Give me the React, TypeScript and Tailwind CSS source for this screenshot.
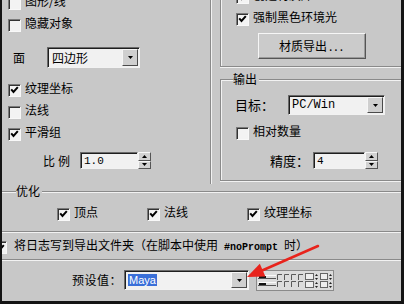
import React from "react";

function Check({ checked = false, className = "" }: { checked?: boolean; className?: string }) {
  return (
    <div
      className={
        "w-[13px] h-[13px] shrink-0 bg-[#f3f3f3] border-t border-l border-t-[#7a7a7a] border-l-[#7a7a7a] border-b border-r border-b-[#f8f8f8] border-r-[#f8f8f8] shadow-[inset_1px_1px_0_#333333] flex items-center justify-center " +
        className
      }
    >
      {checked && (
        <svg width="9" height="8" viewBox="0 0 9 8">
          <path d="M1.2 3.4 L3.5 6 L7.8 1.2" stroke="#000" strokeWidth="2" fill="none" />
        </svg>
      )}
    </div>
  );
}

function CheckRow({ label, checked = false, className = "" }: { label: string; checked?: boolean; className?: string }) {
  return (
    <div className={"h-[22px] flex items-center gap-[4px] " + className}>
      <Check checked={checked} className="mt-[4px]" />
      <span className="leading-[14px] whitespace-nowrap">{label}</span>
    </div>
  );
}

function DropBtn() {
  return (
    <div className="w-[16px] my-[1px] mr-[1px] flex items-center justify-center bg-[#cfcfcf] border-t border-l border-t-[#f6f6f6] border-l-[#f6f6f6] border-b border-r border-b-[#4a4a4a] border-r-[#4a4a4a]">
      <svg width="5" height="3" viewBox="0 0 5 3">
        <path d="M0 0H5L2.5 3Z" fill="#000" />
      </svg>
    </div>
  );
}

function Field({ className = "", children }: { className?: string; children?: React.ReactNode }) {
  return (
    <div
      className={
        "flex border-t border-l border-t-[#6a6a6a] border-l-[#6a6a6a] border-b border-r border-b-[#f2f2f2] border-r-[#f2f2f2] shadow-[inset_1px_1px_0_#1e1e1e] bg-[#f1f1f1] " +
        className
      }
    >
      {children}
    </div>
  );
}

function Spin() {
  return (
    <div className="w-[13px] h-full flex flex-col">
      <div className="flex-1 flex items-center justify-center bg-[#d2d2d2] border-t border-l border-t-[#f6f6f6] border-l-[#f6f6f6] border-b border-r border-b-[#555] border-r-[#555]">
        <svg width="5" height="3" viewBox="0 0 5 3">
          <path d="M0 3H5L2.5 0Z" fill="#000" />
        </svg>
      </div>
      <div className="flex-1 flex items-center justify-center bg-[#d2d2d2] border-t border-l border-t-[#f6f6f6] border-l-[#f6f6f6] border-b border-r border-b-[#555] border-r-[#555]">
        <svg width="5" height="3" viewBox="0 0 5 3">
          <path d="M0 0H5L2.5 3Z" fill="#000" />
        </svg>
      </div>
    </div>
  );
}

function Widget() {
  const corners: React.ReactNode[] = [];
  for (let c = 0; c < 4; c++) {
    for (let r = 0; r < 2; r++) {
      const x = 21 + c * 7;
      const y = 4 + r * 7;
      corners.push(
        <path key={c + "-" + r} d={`M${x + 0.5} ${y + 6} V${y + 0.5} H${x + 5}`} stroke="#5a5a5a" fill="none" />
      );
    }
  }
  return (
    <svg width="78" height="21" viewBox="0 0 78 21">
      <rect x="0.5" y="0.5" width="77" height="20" fill="#dcdcdc" stroke="#8a8a8a" />
      <line x1="2" y1="5.5" x2="20" y2="5.5" stroke="#fafafa" />
      <line x1="2" y1="8.5" x2="20" y2="8.5" stroke="#555" />
      <rect x="3" y="6" width="7" height="2" fill="#111" />
      <line x1="2" y1="12.5" x2="20" y2="12.5" stroke="#fafafa" />
      <line x1="2" y1="15.5" x2="20" y2="15.5" stroke="#555" />
      <rect x="3" y="13" width="7" height="2" fill="#111" />
      {corners}
      <rect x="49.5" y="3.5" width="8" height="6" fill="#eee" stroke="#666" />
      <rect x="49.5" y="11.5" width="8" height="6" fill="#eee" stroke="#666" />
      <path d="M59 6 L60.5 4 L62 6Z M59 8 L60.5 10 L62 8Z M59 14 L60.5 12 L62 14Z M59 16 L60.5 18 L62 16Z" fill="#222" />
      <rect x="64.5" y="3.5" width="7" height="6" fill="#eee" stroke="#666" />
      <rect x="64.5" y="11.5" width="7" height="6" fill="#eee" stroke="#666" />
      <path d="M73 6 L74.5 4 L76 6Z M73 8 L74.5 10 L76 8Z M73 14 L74.5 12 L76 14Z M73 16 L74.5 18 L76 16Z" fill="#222" />
    </svg>
  );
}

export default function App() {
  return (
    <div className="relative w-[404px] h-[304px] overflow-hidden bg-[#c8c8c8] border-l-2 border-r-[3px] border-b-[3px] border-[#141414] font-['Noto_Sans_CJK_SC','Noto_Sans',sans-serif] text-[12px] leading-[14px] text-black">
      {/* top area */}
      <div className="flex h-[184px]">
        {/* left panel */}
        <div className="w-[208px] shrink-0 flex flex-col pl-[6px]">
          <CheckRow label="图形/线" className="-mt-[10px]" />
          <CheckRow label="隐藏对象" />
          <div className="mt-[13px] h-[21px] flex items-center">
            <span className="ml-[5px] w-[34px]">面</span>
            <Field className="w-[93px] h-full">
              <div className="flex-1 flex items-center pl-[4px]">四边形</div>
              <DropBtn />
            </Field>
          </div>
          <CheckRow label="纹理坐标" checked className="mt-[9px]" />
          <CheckRow label="法线" />
          <CheckRow label="平滑组" checked />
          <div className="mt-[9px] h-[17px] flex items-center">
            <span className="ml-[35px] w-[37px] tracking-[3px]">比例</span>
            <Field className="w-[58px] h-full">
              <div className="flex-1 flex items-center pl-[3px] font-['Liberation_Mono',monospace] text-[11px]">1.0</div>
            </Field>
            <Spin />
          </div>
        </div>
        <div className="w-px bg-[#8a8a8a]" />
        <div className="w-px bg-[#f2f2f2]" />
        {/* right column */}
        <div className="flex-1 flex flex-col pl-[8px]">
          <div className="-mt-[16px] flex flex-col border-l border-b border-[#8a8a8a] shadow-[inset_1px_0_0_#f2f2f2,0_1px_0_#f2f2f2] pl-[15px] pb-[7px]">
            <CheckRow label="创建材质库" checked />
            <CheckRow label="强制黑色环境光" checked />
            <div className="mt-[5px] ml-[22px] w-[108px] h-[26px] flex items-center justify-center bg-[#cbcbcb] border-t border-l border-t-[#f6f6f6] border-l-[#f6f6f6] border-b border-r border-b-[#555] border-r-[#555] shadow-[inset_-1px_-1px_0_#9a9a9a]">
              <span>材质导出</span>
              <span className="tracking-[2px] ml-[2px]">...</span>
            </div>
          </div>
          {/* 输出 */}
          <div className="mt-[5px] h-[14px] flex items-start">
            <div className="w-[13px] h-[7px] mt-[7px] border-t border-l border-[#8a8a8a] shadow-[inset_1px_1px_0_#f2f2f2]" />
            <span className="leading-[14px]">输出</span>
            <div className="flex-1 ml-[2px] h-[2px] mt-[7px] border-t border-[#8a8a8a] bg-[#f2f2f2]" />
          </div>
          <div className="flex flex-col border-l border-b border-[#8a8a8a] shadow-[inset_1px_0_0_#f2f2f2,0_1px_0_#f2f2f2] pl-[14px] pb-[11px]">
            <div className="mt-[9px] h-[20px] flex items-center">
              <span className="w-[53px] text-[13px] whitespace-nowrap">目标：</span>
              <Field className="w-[97px] h-full">
                <div className="flex-1 flex items-center pl-[3px] font-['Liberation_Mono',monospace] text-[12px]">PC/Win</div>
                <DropBtn />
              </Field>
            </div>
            <CheckRow label="相对数量" className="mt-[5px] ml-[1px]" />
            <div className="mt-[10px] h-[17px] flex items-center">
              <span className="ml-[35px] w-[43px] text-[13px] whitespace-nowrap">精度：</span>
              <Field className="w-[52px] h-full">
                <div className="flex-1 flex items-center pl-[3px] font-['Liberation_Mono',monospace] text-[11px]">4</div>
              </Field>
              <Spin />
            </div>
          </div>
        </div>
      </div>

      {/* 优化 */}
      <div className="h-[14px] flex items-start">
        <div className="w-[14px] h-[2px] mt-[7px] border-t border-[#8a8a8a] bg-[#f2f2f2]" />
        <span className="leading-[14px]">优化</span>
        <div className="flex-1 ml-[2px] h-[2px] mt-[7px] border-t border-[#8a8a8a] bg-[#f2f2f2]" />
      </div>
      <div className="mt-[3px] h-[22px] flex items-center">
        <CheckRow label="顶点" checked className="ml-[55px] w-[90px]" />
        <CheckRow label="法线" checked className="w-[100px]" />
        <CheckRow label="纹理坐标" checked />
      </div>
      <div className="mt-[8px] h-[2px] border-t border-[#8a8a8a] bg-[#f2f2f2]" />
      <div className="h-[26px] flex items-center">
        <Check checked className="-ml-[8px] mt-[3px]" />
        <span className="ml-[7px] whitespace-nowrap">
          将日志写到导出文件夹（在脚本中使用
          <span className="font-['Liberation_Mono',monospace] text-[10px] font-bold"> #noPrompt </span>
          时）
        </span>
      </div>
      <div className="h-[2px] border-t border-[#8a8a8a] bg-[#f2f2f2]" />
      <div className="mt-[9px] h-[20px] flex items-center">
        <span className="ml-[70px] w-[52px] text-[12px] tracking-[0.5px] whitespace-nowrap">预设值：</span>
        <Field className="w-[125px] h-full">
          <div className="flex-1 flex items-center pl-[3px]">
            <span className="bg-[#3a6fd8] text-white font-['Liberation_Sans',sans-serif] text-[11px] leading-[12px] px-[1px]">Maya</span>
          </div>
          <DropBtn />
        </Field>
        <div className="ml-[7px] h-full">
          <Widget />
        </div>
      </div>

      {/* red arrow overlay */}
      <svg className="absolute -left-[2px] top-0 pointer-events-none" width="404" height="304" viewBox="0 0 404 304">
        <line x1="318" y1="246" x2="261" y2="271" stroke="#e8231c" strokeWidth="2.5" strokeLinecap="round" />
        <path d="M247 277 L265.4 276.6 L259.8 263.8 Z" fill="#e8231c" />
      </svg>
    </div>
  );
}
